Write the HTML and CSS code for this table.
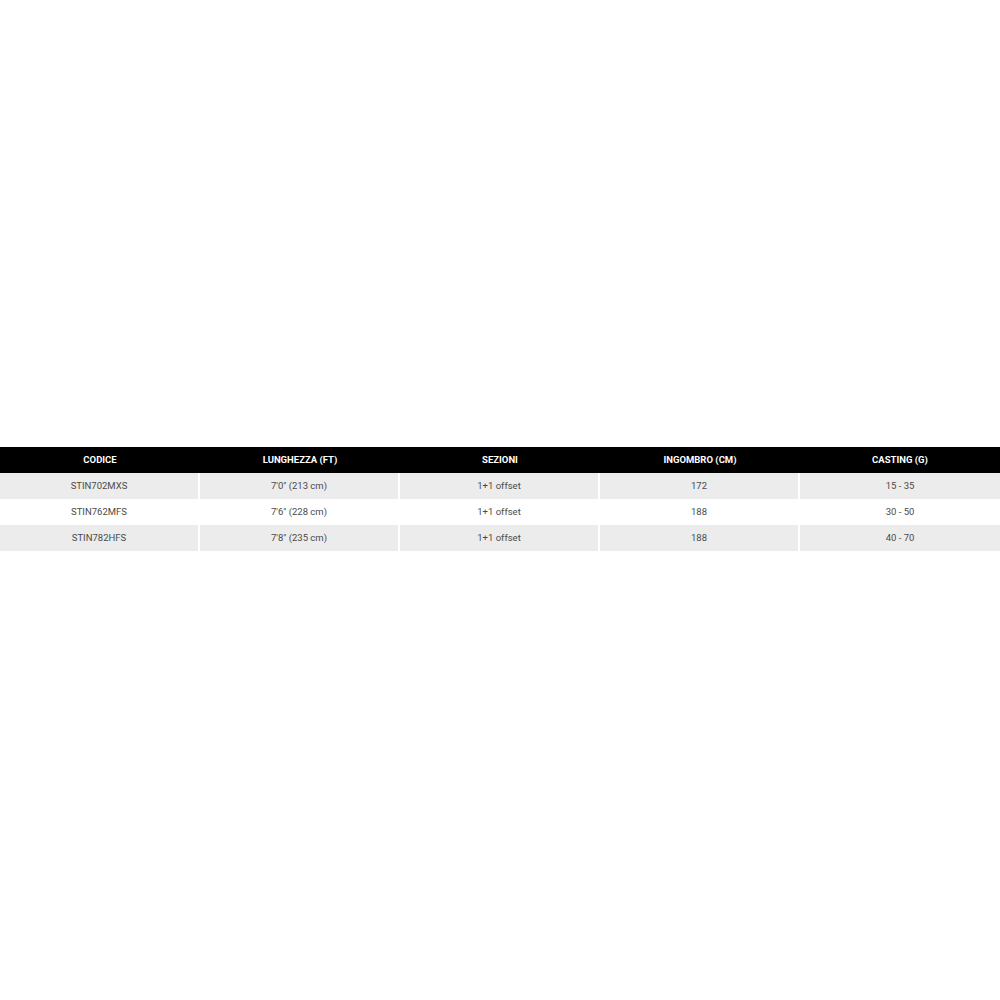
FILE: index.html
```html
<!DOCTYPE html>
<html lang="it">
<head>
<meta charset="utf-8">
<title>Tabella</title>
<link rel="stylesheet" href="styles.css">
</head>
<body>
<div class="page">
<table class="specs">
<thead>
<tr><th>CODICE</th><th>LUNGHEZZA (FT)</th><th>SEZIONI</th><th>INGOMBRO (CM)</th><th>CASTING (G)</th></tr>
</thead>
<tbody>
<tr class="odd"><td>STIN702MXS</td><td>7'0" (213 cm)</td><td>1+1 offset</td><td>172</td><td>15 - 35</td></tr>
<tr><td>STIN762MFS</td><td>7'6" (228 cm)</td><td>1+1 offset</td><td>188</td><td>30 - 50</td></tr>
<tr class="odd"><td>STIN782HFS</td><td>7'8" (235 cm)</td><td>1+1 offset</td><td>188</td><td>40 - 70</td></tr>
</tbody>
</table>
</div>
</body>
</html>
```
FILE: styles.css
```css
html, body { margin: 0; padding: 0; background: #fff; }
.page {
  min-height: 100vh;
  display: flex;
  align-items: center;
  width: 1000px;
}
.specs {
  width: 1000px;
  margin-top: -2px;
  table-layout: fixed;
  border-collapse: separate;
  border-spacing: 0;
  font-family: Roboto, "Liberation Sans", sans-serif;
  font-size: 9.5px;
  text-align: center;
}
.specs th {
  background: #000;
  color: #fff;
  font-weight: 700;
  height: 26px;
  padding: 0 0 2px;
  box-sizing: border-box;
  vertical-align: middle;
}
.specs td {
  height: 26px;
  padding: 0 0 1px;
  box-sizing: border-box;
  color: #4a4a4a;
  border-right: 2px solid #fff;
  vertical-align: middle;
}
.specs td:last-child { border-right: 0; }
.specs tr.odd td { background: #ececec; }
```
